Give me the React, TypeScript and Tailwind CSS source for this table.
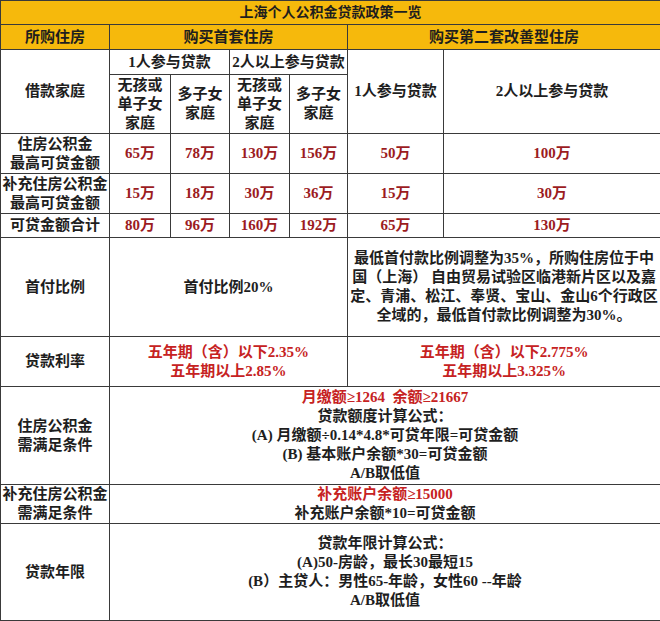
import React from "react";

const B = "border border-[#3a3a3a]";
const red1 = "text-[#9c1c1f]";
const red2 = "text-[#c62222]";

export default function App() {
  const font = { fontFamily: '"Liberation Serif", "Noto Sans CJK SC", serif' };
  return (
    <div className="w-[660px] h-[621px] bg-white overflow-hidden" style={font}>
      <table className="w-[660px] table-fixed border-collapse text-[15px] leading-[19px] text-[#1e1e1e] font-bold text-center">
        <colgroup>
          <col className="w-[109px]" />
          <col className="w-[61px]" />
          <col className="w-[59px]" />
          <col className="w-[60px]" />
          <col className="w-[58px]" />
          <col className="w-[96px]" />
          <col className="w-[217px]" />
        </colgroup>
        <tbody>
          <tr className="h-[24px] bg-[#f6b90c]">
            <td colSpan={7} className={`${B} p-0 text-[14px]`}>上海个人公积金贷款政策一览</td>
          </tr>
          <tr className="h-[25px] bg-[#f6b90c]">
            <td className={`${B} p-0`}>所购住房</td>
            <td colSpan={4} className={`${B} p-0`}>购买首套住房</td>
            <td colSpan={2} className={`${B} p-0`}>购买第二套改善型住房</td>
          </tr>
          <tr className="h-[25px]">
            <td rowSpan={2} className={`${B} p-0`}>借款家庭</td>
            <td colSpan={2} className={`${B} p-0`}>1人参与贷款</td>
            <td colSpan={2} className={`${B} p-0 whitespace-nowrap`}>2人以上参与贷款</td>
            <td rowSpan={2} className={`${B} p-0`}>1人参与贷款</td>
            <td rowSpan={2} className={`${B} p-0`}>2人以上参与贷款</td>
          </tr>
          <tr className="h-[59px]">
            <td className={`${B} p-0`}>无孩或<br />单子女<br />家庭</td>
            <td className={`${B} p-0`}>多子女<br />家庭</td>
            <td className={`${B} p-0`}>无孩或<br />单子女<br />家庭</td>
            <td className={`${B} p-0`}>多子女<br />家庭</td>
          </tr>
          <tr className="h-[40px]">
            <td className={`${B} p-0`}>住房公积金<br />最高可贷金额</td>
            <td className={`${B} p-0 ${red1}`}>65万</td>
            <td className={`${B} p-0 ${red1}`}>78万</td>
            <td className={`${B} p-0 ${red1}`}>130万</td>
            <td className={`${B} p-0 ${red1}`}>156万</td>
            <td className={`${B} p-0 ${red1}`}>50万</td>
            <td className={`${B} p-0 ${red1}`}>100万</td>
          </tr>
          <tr className="h-[40px]">
            <td className={`${B} p-0 whitespace-nowrap`}>补充住房公积金<br />最高可贷金额</td>
            <td className={`${B} p-0 ${red1}`}>15万</td>
            <td className={`${B} p-0 ${red1}`}>18万</td>
            <td className={`${B} p-0 ${red1}`}>30万</td>
            <td className={`${B} p-0 ${red1}`}>36万</td>
            <td className={`${B} p-0 ${red1}`}>15万</td>
            <td className={`${B} p-0 ${red1}`}>30万</td>
          </tr>
          <tr className="h-[24px]">
            <td className={`${B} p-0`}>可贷金额合计</td>
            <td className={`${B} p-0 ${red1}`}>80万</td>
            <td className={`${B} p-0 ${red1}`}>96万</td>
            <td className={`${B} p-0 ${red1}`}>160万</td>
            <td className={`${B} p-0 ${red1}`}>192万</td>
            <td className={`${B} p-0 ${red1}`}>65万</td>
            <td className={`${B} p-0 ${red1}`}>130万</td>
          </tr>
          <tr className="h-[99px]">
            <td className={`${B} p-0`}>首付比例</td>
            <td colSpan={4} className={`${B} p-0`}>首付比例20%</td>
            <td colSpan={2} className={`${B} p-0 whitespace-nowrap`}>
              最低首付款比例调整为35%，所购住房位于中<br />
              国（上海） 自由贸易试验区临港新片区以及嘉<br />
              定、青浦、松江、奉贤、宝山、金山6个行政区<br />
              全域的，最低首付款比例调整为30%。
            </td>
          </tr>
          <tr className="h-[50px]">
            <td className={`${B} p-0`}>贷款利率</td>
            <td colSpan={4} className={`${B} p-0 ${red2}`}>五年期（含）以下2.35%<br />五年期以上2.85%</td>
            <td colSpan={2} className={`${B} p-0 ${red2}`}>五年期（含）以下2.775%<br />五年期以上3.325%</td>
          </tr>
          <tr className="h-[98px]">
            <td className={`${B} p-0`}>住房公积金<br />需满足条件</td>
            <td colSpan={6} className={`${B} p-0`}>
              <span className={red2}>月缴额≥1264&nbsp;&nbsp;余额≥21667</span><br />
              贷款额度计算公式：<br />
              (A) 月缴额÷0.14*4.8*可贷年限=可贷金额<br />
              (B) 基本账户余额*30=可贷金额<br />
              A/B取低值
            </td>
          </tr>
          <tr className="h-[37px]">
            <td className={`${B} p-0 whitespace-nowrap`}>补充住房公积金<br />需满足条件</td>
            <td colSpan={6} className={`${B} p-0`}>
              <span className={red2}>补充账户余额≥15000</span><br />
              补充账户余额*10=可贷金额
            </td>
          </tr>
          <tr className="h-[97px]">
            <td className={`${B} p-0`}>贷款年限</td>
            <td colSpan={6} className={`${B} p-0`}>
              贷款年限计算公式：<br />
              (A)50-房龄，最长30最短15<br />
              (B）主贷人：男性65-年龄，女性60 --年龄<br />
              A/B取低值
            </td>
          </tr>
        </tbody>
      </table>
    </div>
  );
}
